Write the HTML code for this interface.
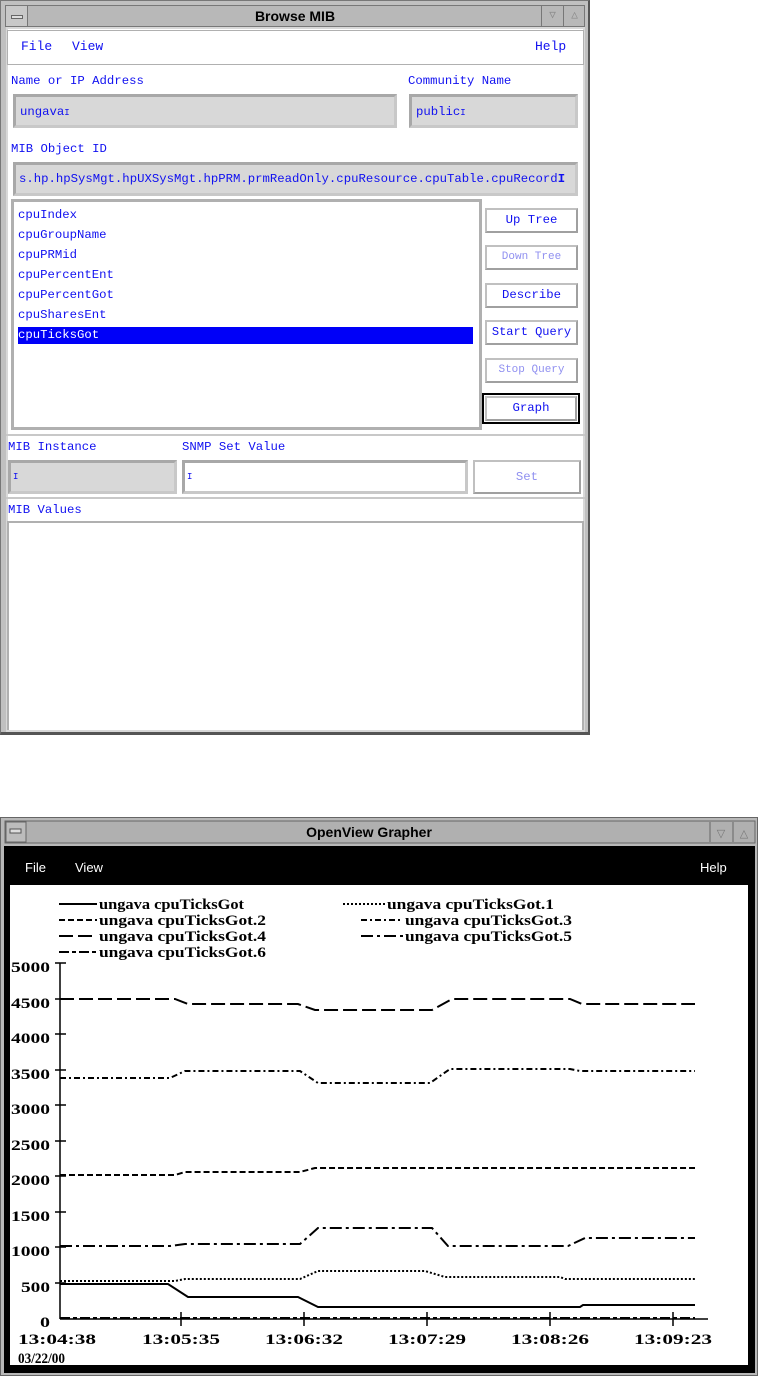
<!DOCTYPE html>
<html><head><meta charset="utf-8"><style>
body{margin:0;width:758px;height:1376px;background:#fff;position:relative;overflow:hidden;font-family:"Liberation Mono",monospace;}
.a{position:absolute;box-sizing:border-box}
.t{position:absolute;color:#1010f0;font-size:12.3px;font-family:"Liberation Mono",monospace;white-space:nowrap;line-height:14px}
.fld{position:absolute;box-sizing:border-box;border:3px solid #a8a8a8;border-right-color:#c8c8c8;border-bottom-color:#c8c8c8;background:#d8d8d8}
.btn{position:absolute;box-sizing:border-box;border:2px solid #c0c0c0;border-right-color:#a0a0a0;border-bottom-color:#a0a0a0;background:#fff;color:#1010f0;font-size:12.3px;text-align:center;font-family:"Liberation Mono",monospace;white-space:nowrap}
.dis{color:#9090f0}
</style></head><body>
<div class="a" style="left:0;top:2;width:590px;height:735px;background:#c0c0c0;border:1px solid #777;border-right:2px solid #555;border-bottom:3px solid #555"></div>
<div class="a" style="left:5px;top:5px;width:580px;height:22px;background:#b8b8b8;border:1px solid #777"></div>
<div class="a" style="left:6px;top:6px;width:22px;height:20px;background:#c8c8c8;border-right:1px solid #777"></div>
<div class="a" style="left:11px;top:15px;width:12px;height:4px;border:1px solid #666;background:#ddd"></div>
<div class="a" style="left:541px;top:6px;width:22px;height:20px;border-left:1px solid #777;color:#888;font-size:11px;text-align:center;line-height:20px">▽</div>
<div class="a" style="left:563px;top:6px;width:22px;height:20px;border-left:1px solid #777;color:#888;font-size:11px;text-align:center;line-height:20px">△</div>
<div class="a" style="left:0;top:6px;width:590px;text-align:center;font:bold 14px 'Liberation Sans',sans-serif;line-height:20px">Browse MIB</div>
<div class="a" style="left:6px;top:27px;width:579px;height:705px;background:#fff;border:2px solid #d8d8d8"></div>
<div class="a" style="left:7px;top:30px;width:577px;height:35px;background:#fff;border:1px solid #b0b0b0"></div>
<div class="t" style="left:21px;top:40px;font-size:13px">File</div>
<div class="t" style="left:72px;top:40px;font-size:13px">View</div>
<div class="t" style="left:535px;top:40px;font-size:13px">Help</div>
<div class="t" style="left:11px;top:74px">Name or IP Address</div>
<div class="t" style="left:408px;top:74px">Community Name</div>
<div class="fld" style="left:13px;top:94px;width:384px;height:34px"></div>
<div class="t" style="left:20px;top:105px">ungava<span style="font-size:9px">I</span></div>
<div class="fld" style="left:409px;top:94px;width:169px;height:34px"></div>
<div class="t" style="left:416px;top:105px">public<span style="font-size:9px">I</span></div>
<div class="t" style="left:11px;top:142px">MIB Object ID</div>
<div class="fld" style="left:13px;top:162px;width:565px;height:34px"></div>
<div class="t" style="left:19px;top:172px;width:553px;overflow:hidden">s.hp.hpSysMgt.hpUXSysMgt.hpPRM.prmReadOnly.cpuResource.cpuTable.cpuRecord<b>I</b></div>
<div class="a" style="left:11px;top:199px;width:471px;height:231px;border:3px solid #b0b0b0;background:#fff"></div>
<div class="t" style="left:18px;top:208px">cpuIndex</div>
<div class="t" style="left:18px;top:228px">cpuGroupName</div>
<div class="t" style="left:18px;top:248px">cpuPRMid</div>
<div class="t" style="left:18px;top:268px">cpuPercentEnt</div>
<div class="t" style="left:18px;top:288px">cpuPercentGot</div>
<div class="t" style="left:18px;top:308px">cpuSharesEnt</div>
<div class="a" style="left:18px;top:327px;width:455px;height:17px;background:#0000f8"></div>
<div class="t" style="left:18px;top:328px;color:#fff">cpuTicksGot</div>
<div class="btn" style="left:485px;top:208px;width:93px;height:25px;line-height:21px">Up Tree</div>
<div class="btn dis" style="left:485px;top:245px;width:93px;height:25px;line-height:21px;font-size:11px">Down Tree</div>
<div class="btn" style="left:485px;top:283px;width:93px;height:25px;line-height:21px">Describe</div>
<div class="btn" style="left:485px;top:320px;width:93px;height:25px;line-height:21px;font-size:12px">Start Query</div>
<div class="btn dis" style="left:485px;top:358px;width:93px;height:25px;line-height:21px;font-size:11px">Stop Query</div>
<div class="a" style="left:482px;top:393px;width:98px;height:31px;border:2px solid #000"></div>
<div class="btn" style="left:485px;top:396px;width:92px;height:25px;line-height:21px">Graph</div>
<div class="a" style="left:6px;top:434px;width:579px;height:2px;background:#c8c8c8"></div>
<div class="t" style="left:8px;top:440px">MIB Instance</div>
<div class="t" style="left:182px;top:440px">SNMP Set Value</div>
<div class="fld" style="left:8px;top:460px;width:169px;height:34px"></div>
<div class="t" style="left:13px;top:470px;font-size:9px">I</div>
<div class="fld" style="left:182px;top:460px;width:286px;height:34px;background:#fff"></div>
<div class="t" style="left:187px;top:470px;font-size:9px">I</div>
<div class="btn dis" style="left:473px;top:460px;width:108px;height:34px;line-height:30px">Set</div>
<div class="a" style="left:6px;top:497px;width:579px;height:2px;background:#c8c8c8"></div>
<div class="t" style="left:8px;top:503px">MIB Values</div>
<div class="a" style="left:7px;top:521px;width:577px;height:209px;border:2px solid #b0b0b0;border-bottom:none;background:#fff"></div>

<svg class="a" style="left:0;top:0" width="758" height="1376" xmlns="http://www.w3.org/2000/svg">
<rect x="0" y="817" width="758" height="559" fill="#b8b8b8"/>
<rect x="0.5" y="817.5" width="757" height="558" fill="none" stroke="#666"/>
<rect x="5" y="821" width="750" height="22" fill="#b0b0b0" stroke="#666"/>
<rect x="6" y="822" width="20" height="20" fill="#bcbcbc" stroke="#666"/>
<rect x="10" y="829" width="11" height="4" fill="#ddd" stroke="#555"/>
<line x1="710" y1="822" x2="710" y2="842" stroke="#666"/><line x1="733" y1="822" x2="733" y2="842" stroke="#666"/>
<text x="721" y="837" font-size="11" text-anchor="middle" fill="#777" font-family="DejaVu Sans">▽</text>
<text x="744" y="837" font-size="11" text-anchor="middle" fill="#777" font-family="DejaVu Sans">△</text>
<text x="369" y="837" font-size="14" font-weight="bold" text-anchor="middle" font-family="Liberation Sans">OpenView Grapher</text>
<rect x="4" y="846" width="751" height="527" fill="#000"/>
<rect x="10" y="885" width="738" height="480" fill="#fff"/>
<g font-family="Liberation Sans" font-size="13" fill="#fff"><text x="25" y="872">File</text><text x="75" y="872">View</text><text x="700" y="872">Help</text></g>
<g font-family="Liberation Serif" font-size="15" font-weight="bold" fill="#000" lengthAdjust="spacingAndGlyphs">
<text x="99" y="909" textLength="145" lengthAdjust="spacingAndGlyphs">ungava cpuTicksGot</text>
<text x="387" y="909" textLength="167" lengthAdjust="spacingAndGlyphs">ungava cpuTicksGot.1</text>
<text x="99" y="925" textLength="167" lengthAdjust="spacingAndGlyphs">ungava cpuTicksGot.2</text>
<text x="405" y="925" textLength="167" lengthAdjust="spacingAndGlyphs">ungava cpuTicksGot.3</text>
<text x="99" y="941" textLength="167" lengthAdjust="spacingAndGlyphs">ungava cpuTicksGot.4</text>
<text x="405" y="941" textLength="167" lengthAdjust="spacingAndGlyphs">ungava cpuTicksGot.5</text>
<text x="99" y="957" textLength="167" lengthAdjust="spacingAndGlyphs">ungava cpuTicksGot.6</text>
</g>
<g stroke="#000" stroke-width="2" fill="none">
<line x1="59" y1="904" x2="97" y2="904"/>
<line x1="343" y1="904" x2="385" y2="904" stroke-dasharray="2,2"/>
<line x1="59" y1="920" x2="97" y2="920" stroke-dasharray="6,3"/>
<line x1="361" y1="920" x2="403" y2="920" stroke-dasharray="6,3,2,3"/>
<line x1="59" y1="936" x2="97" y2="936" stroke-dasharray="14,5"/>
<line x1="361" y1="936" x2="403" y2="936" stroke-dasharray="12,4,3,4"/>
<line x1="59" y1="952" x2="97" y2="952" stroke-dasharray="10,3,4,3"/>
</g>
<g stroke="#000" stroke-width="1.5">
<line x1="60" y1="963" x2="60" y2="1319"/>
<line x1="60" y1="1319" x2="708" y2="1319"/>
<line x1="55" y1="963" x2="66" y2="963"/><line x1="55" y1="999" x2="66" y2="999"/><line x1="55" y1="1034" x2="66" y2="1034"/><line x1="55" y1="1070" x2="66" y2="1070"/><line x1="55" y1="1105" x2="66" y2="1105"/><line x1="55" y1="1141" x2="66" y2="1141"/><line x1="55" y1="1176" x2="66" y2="1176"/><line x1="55" y1="1212" x2="66" y2="1212"/><line x1="55" y1="1247" x2="66" y2="1247"/><line x1="55" y1="1283" x2="66" y2="1283"/>
<line x1="181" y1="1312" x2="181" y2="1326"/><line x1="304" y1="1312" x2="304" y2="1326"/><line x1="427" y1="1312" x2="427" y2="1326"/><line x1="550" y1="1312" x2="550" y2="1326"/><line x1="673" y1="1312" x2="673" y2="1326"/>
</g>
<g font-family="Liberation Serif" font-size="15" font-weight="bold">
<text x="11" y="972" textLength="39" lengthAdjust="spacingAndGlyphs">5000</text><text x="11" y="1008" textLength="39" lengthAdjust="spacingAndGlyphs">4500</text><text x="11" y="1043" textLength="39" lengthAdjust="spacingAndGlyphs">4000</text><text x="11" y="1079" textLength="39" lengthAdjust="spacingAndGlyphs">3500</text><text x="11" y="1114" textLength="39" lengthAdjust="spacingAndGlyphs">3000</text><text x="11" y="1150" textLength="39" lengthAdjust="spacingAndGlyphs">2500</text><text x="11" y="1185" textLength="39" lengthAdjust="spacingAndGlyphs">2000</text><text x="11" y="1221" textLength="39" lengthAdjust="spacingAndGlyphs">1500</text><text x="11" y="1256" textLength="39" lengthAdjust="spacingAndGlyphs">1000</text><text x="21" y="1292" textLength="29" lengthAdjust="spacingAndGlyphs">500</text><text x="40" y="1327" textLength="10" lengthAdjust="spacingAndGlyphs">0</text>
<text x="18" y="1344" textLength="78" lengthAdjust="spacingAndGlyphs">13:04:38</text><text x="142" y="1344" textLength="78" lengthAdjust="spacingAndGlyphs">13:05:35</text><text x="265" y="1344" textLength="78" lengthAdjust="spacingAndGlyphs">13:06:32</text><text x="388" y="1344" textLength="78" lengthAdjust="spacingAndGlyphs">13:07:29</text><text x="511" y="1344" textLength="78" lengthAdjust="spacingAndGlyphs">13:08:26</text><text x="634" y="1344" textLength="78" lengthAdjust="spacingAndGlyphs">13:09:23</text>
<text x="18" y="1363" textLength="47" lengthAdjust="spacingAndGlyphs">03/22/00</text>
</g>
<g stroke="#000" stroke-width="2" fill="none">
<polyline points="60,1284 168,1284 188,1297 298,1297 318,1307 580,1307 583,1305 695,1305"/>
<polyline points="60,1281 175,1281 185,1279 300,1279 318,1271 425,1271 445,1277 560,1277 565,1279 695,1279" stroke-dasharray="2,2"/>
<polyline points="60,1175 175,1175 185,1172 300,1172 315,1168 695,1168" stroke-dasharray="6,3"/>
<polyline points="60,1078 170,1078 185,1071 300,1071 318,1083 430,1083 450,1069 570,1069 580,1071 695,1071" stroke-dasharray="6,3,2,3"/>
<polyline points="60,999 175,999 188,1004 298,1004 315,1010 432,1010 452,999 570,999 582,1004 695,1004" stroke-dasharray="14,5"/>
<polyline points="60,1246 170,1246 185,1244 300,1244 318,1228 432,1228 448,1246 568,1246 585,1238 695,1238" stroke-dasharray="12,4,3,4"/>
<polyline points="60,1318 695,1318" stroke-dasharray="10,3,4,3"/>
</g>
</svg>
</body></html>
